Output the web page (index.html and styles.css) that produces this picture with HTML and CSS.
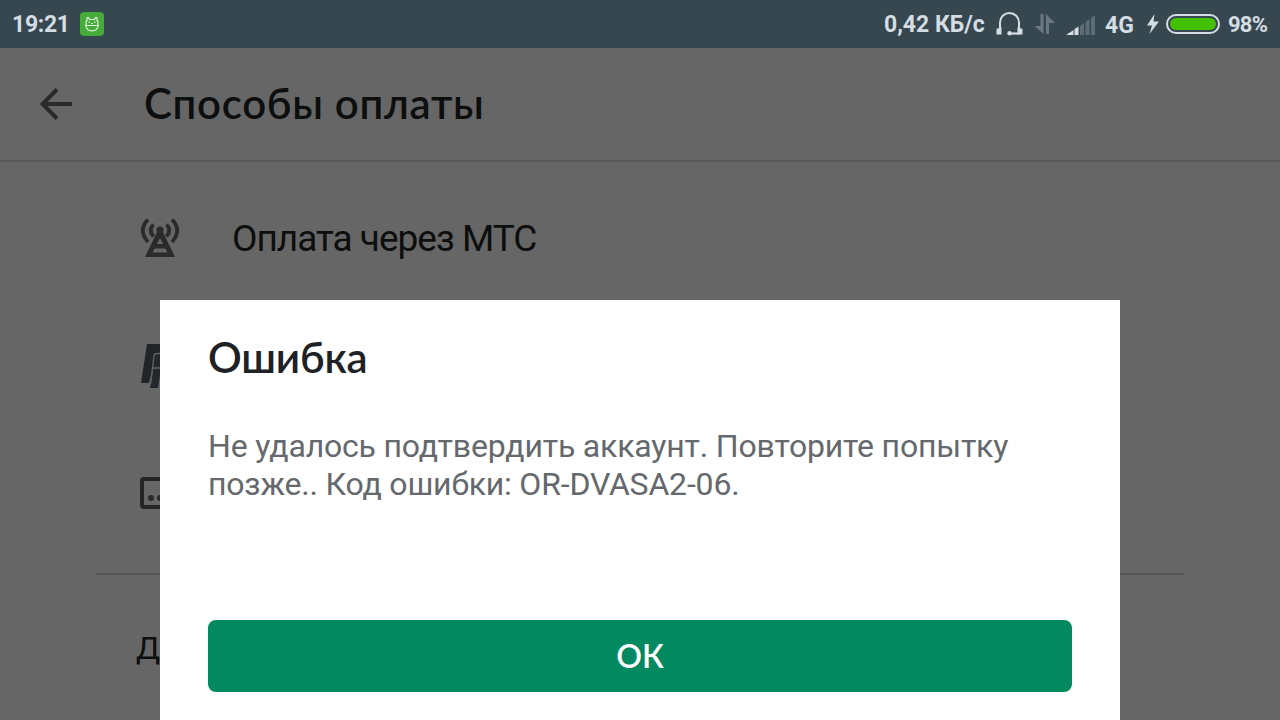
FILE: index.html
```html
<!DOCTYPE html>
<html lang="ru">
<head>
  <meta charset="UTF-8" />
  <meta name="viewport" content="width=device-width, initial-scale=1.0"/>
  <title>Способы оплаты</title>
  <link rel="stylesheet" href="styles.css">
</head>
<body>

  <!-- Status bar -->
  <div class="status-bar">
    <span class="clock">19:21</span>
    <svg class="app-badge" width="24" height="24" viewBox="0 0 24 24">
      <rect width="24" height="24" rx="4" fill="#46ab3b"/>
      <g fill="none" stroke="#dcf5d8" stroke-width="1.2" stroke-linejoin="round">
        <path d="M6 13V10L7 8.500V5.500H8.500L9.500 7.500H14.500L15.500 5.500H17V8.500L18 10V13"/>
        <path d="M5 13.500H19M6 14Q6.500 18.800 12 18.800Q17.500 18.800 18 14"/>
        <path d="M8.500 9.800L10 10.500M15.500 9.800L14 10.500M11 11.500H13"/>
      </g>
    </svg>

    <div class="status-right">
      <span class="speed">0,42 КБ/с</span>
      <svg class="headset" width="28" height="26" viewBox="0 0 28 26">
        <path d="M4 19V11.500A9.500 9.500 0 0 1 23 11.500V20" fill="none" stroke="#d3dde3" stroke-width="2"/>
        <path d="M0.500 18L5.500 16V23.500H0.500ZM26.500 18L21.500 16V23.500H26.500Z" fill="#d3dde3"/>
        <path d="M14 22.500H24" stroke="#d3dde3" stroke-width="2.200"/>
        <circle cx="13.500" cy="22.300" r="2.200" fill="#d3dde3"/>
      </svg>
      <svg class="traffic" width="22" height="22" viewBox="0 0 22 22">
        <path d="M6.500 1H9.500V21L0.500 13H6.500ZM12 1L21 10H15V21H12Z" fill="#697880"/>
      </svg>
      <svg class="signal" width="30" height="20" viewBox="0 0 30 20">
        <path d="M0 19L7.500 14V19ZM8.500 13L12.500 10.500V19H8.500Z" fill="#d3dde3"/>
        <path d="M14 10L18 7V19H14ZM19.500 6L23.500 3V19H19.500ZM25 2L29 -1V19H25Z" fill="#5d6d75"/>
      </svg>
      <span class="network">4G</span>
      <svg class="bolt" width="14" height="20" viewBox="0 0 14 20">
        <path d="M8.500 0L1 11.500H6L3.500 20L13 7.500H7.500Z" fill="#d3dde3"/>
      </svg>
      <span class="battery"><span class="battery-level"></span></span>
      <span class="percent">98%</span>
    </div>
  </div>

  <!-- Payment methods, dimmed behind the dialog -->
  <main class="screen">
    <header class="app-bar">
      <svg class="back" width="32" height="32" viewBox="0 0 32 32">
        <path d="M32 16H3M17 1.500L2.500 16L17 30.500" fill="none" stroke="#292b2b" stroke-width="4"/>
      </svg>
      <h1>Способы оплаты</h1>
    </header>

    <ul class="methods">
      <li>
        <svg width="40" height="40" viewBox="0 0 40 40">
          <g fill="none" stroke="#292b2c" stroke-width="3.800">
            <path d="M8 1.500Q-2.500 12 8 24M32 1.500Q42.500 12 32 24"/>
            <path d="M13.500 6.500Q8 12 13.500 18.500M26.500 6.500Q32 12 26.500 18.500"/>
          </g>
          <circle cx="20" cy="12" r="3.600" fill="#292b2c"/>
          <path fill="#292b2c" fill-rule="evenodd" d="M18 12H22L35 39H5ZM20 20L17 26H23ZM14.500 30.500L12.500 34.500H27.500L25.500 30.500Z"/>
        </svg>
        <span class="method-name">Оплата через МТС</span>
      </li>
      <li>
        <svg width="40" height="46" viewBox="0 0 40 46">
          <path d="M7 1H27Q36 3 33 14Q31 24 20 24H13L9 40H1Z" fill="#222527"/>
          <path d="M16 10H33Q40 13 37 23Q34 32 24 32H20L18 45H10Z" fill="#22282c"/>
          <path d="M10.500 41L14 13Q14.500 10.500 17 10.500H34M13 25H24Q31 24 33 12" fill="none" stroke="#5d6164" stroke-width="1.400"/>
        </svg>
      </li>
      <li>
        <svg class="card" width="40" height="32" viewBox="0 0 40 32">
          <rect x="2" y="2" width="36" height="28" rx="2" fill="none" stroke="#242626" stroke-width="4"/>
          <g fill="#292b2b">
            <circle cx="11" cy="21" r="3"/>
            <circle cx="20" cy="21" r="3"/>
            <circle cx="29" cy="21" r="3"/>
          </g>
        </svg>
      </li>
    </ul>

    <section class="more">Д</section>
  </main>

  <!-- Error dialog -->
  <div class="dialog" role="alertdialog" aria-labelledby="dialog-title">
    <h2 id="dialog-title">Ошибка</h2>
    <p>Не удалось подтвердить аккаунт. Повторите попытку позже.. Код ошибки: OR-DVASA2-06.</p>
    <button type="button">ОК</button>
  </div>

</body>
</html>
```
FILE: styles.css
```css
:root {
  --status-bg: #37474f;
  --status-text: #d3dde3;
  --screen-bg: #666;
  --divider: #585858;
  --green: #03895f;
}

* {
  box-sizing: border-box;
}

body {
  margin: 0;
  position: relative;
  height: 720px;
  overflow: hidden;
  background: var(--screen-bg);
  font-family: Roboto, 'Liberation Sans', sans-serif;
}

svg {
  display: block;
  flex-shrink: 0;
}

.status-bar {
  height: 48px;
  padding: 0 12px;
  display: flex;
  align-items: center;
  background: var(--status-bg);
  color: var(--status-text);
  font-size: 23px;
  font-weight: 700;
  white-space: nowrap;
}

.clock {
  width: 68px;
  letter-spacing: -0.3px;
}

.status-right {
  margin-left: auto;
  display: flex;
  align-items: center;
}

.speed {
  width: 112px;
}

.traffic {
  margin-left: 10px;
}

.signal {
  margin: 4px 0 0 10px;
}

.network {
  width: 29px;
  margin-left: 9px;
  padding-top: 2px;
}

.bolt {
  margin-left: 12px;
}

.battery {
  width: 54px;
  height: 20px;
  margin-left: 6px;
  padding: 2px;
  border: 2px solid var(--status-text);
  border-radius: 10px;
}

.battery-level {
  display: block;
  height: 12px;
  border-radius: 6px;
  background: #43c000;
}

.percent {
  width: 40px;
  margin-left: 8px;
  padding-top: 1px;
  font-size: 22px;
  letter-spacing: -0.8px;
}

.app-bar {
  height: 114px;
  padding: 0 40px;
  display: flex;
  align-items: center;
  gap: 72px;
  border-bottom: 2px solid var(--divider);
}

h1,
h2 {
  margin: 0;
  font-family: Lato, 'Open Sans', sans-serif;
  font-weight: 600;
  white-space: nowrap;
}

h1 {
  padding-bottom: 2px;
  color: #0d0e0e;
  font-size: 42px;
  letter-spacing: 0.7px;
}

.methods {
  height: 413px;
  margin: 0 96px;
  padding: 12px 44px 0;
  list-style: none;
  border-bottom: 2px solid var(--divider);
}

.methods li {
  height: 128px;
  display: flex;
  align-items: center;
  gap: 52px;
}

.method-name {
  padding-top: 1px;
  color: #0d0e0e;
  font-size: 37px;
  letter-spacing: -1px;
}

.card {
  margin-bottom: 2px;
}

.more {
  padding: 54px 136px 0;
  color: #0d0e0e;
  font-size: 32px;
}

.dialog {
  position: absolute;
  left: 160px;
  right: 160px;
  bottom: 0;
  height: 420px;
  padding: 31px 48px 28px;
  display: flex;
  flex-direction: column;
  background: #fff;
}

h2 {
  color: #202124;
  font-size: 42px;
  line-height: 52px;
  letter-spacing: -0.2px;
}

.dialog p {
  margin: 44px 0 0;
  color: #65686c;
  font-size: 32px;
  line-height: 38px;
  letter-spacing: -0.18px;
}

.dialog button {
  height: 72px;
  margin-top: auto;
  padding-bottom: 3px;
  border: none;
  border-radius: 8px;
  background: var(--green);
  color: #fff;
  font-family: Lato, 'Open Sans', sans-serif;
  font-size: 32px;
  font-weight: 600;
  cursor: pointer;
}
```
